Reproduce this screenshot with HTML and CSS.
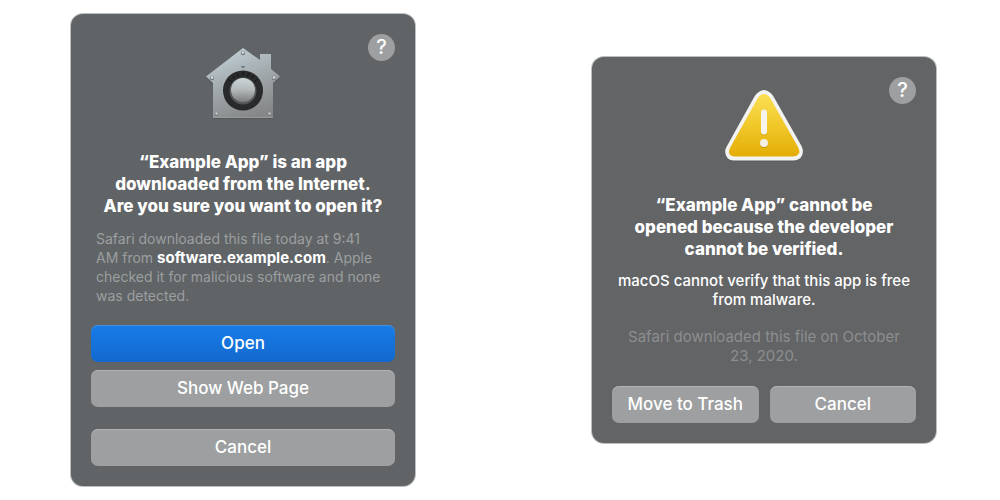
FILE: index.html
```html
<!DOCTYPE html>
<html lang="en">
<head>
<meta charset="utf-8">
<meta name="viewport" content="width=device-width, initial-scale=1">
<title>Open app alerts</title>
<link rel="stylesheet" href="styles.css">
</head>
<body>
<main class="stage">
  <section class="alert alert-cool" role="alertdialog" aria-labelledby="download-title">
    <header class="alert-header">
      <svg class="alert-icon" width="78" height="76" viewBox="0 0 78 76" aria-hidden="true">
        <defs>
          <linearGradient id="metal" x1="0.2" y1="0" x2="0.6" y2="1">
            <stop offset="0" stop-color="#c3d3da"/>
            <stop offset="0.45" stop-color="#a5adb0"/>
            <stop offset="1" stop-color="#858788"/>
          </linearGradient>
          <linearGradient id="knob" x1="0" y1="0" x2="0" y2="1">
            <stop offset="0" stop-color="#cbd5d8"/>
            <stop offset="0.5" stop-color="#b4b8b9"/>
            <stop offset="1" stop-color="#7a7c7d"/>
          </linearGradient>
        </defs>
        <path d="M39 3 56 15V9h11v15l9 7.500-7 6.500v35H9V38l-7-6.500Z" fill="#4c5052" opacity="0.6"/>
        <path d="M39 2 56 14V8h11v15l9 7.500-7 6.500v35H9V37l-7-6.500Z" fill="url(#metal)"/>
        <path d="M9.500 71.500h59" stroke="#989a9b" stroke-width="1"/>
        <path d="M36.500 20h5l-2.500 2.500Z" fill="#70797d"/>
        <circle cx="39" cy="44.500" r="20" fill="#282a2b"/>
        <path d="M39 26v4M33.500 27l1 4M44.500 27l-1 4M28.500 29.500l2 3M49.500 29.500l-2 3M24.500 33.500l3 2M53.500 33.500l-3 2" stroke="#111314" stroke-width="1"/>
        <circle cx="39" cy="45" r="13.500" fill="#555859"/>
        <circle cx="39" cy="44" r="12" fill="url(#knob)"/>
        <g fill="#747b7e">
          <circle cx="39" cy="7" r="2.200"/><circle cx="8" cy="32" r="2.200"/><circle cx="70" cy="32" r="2.200"/>
          <circle cx="12.500" cy="68" r="1.800"/><circle cx="65.500" cy="68" r="1.800"/>
        </g>
        <g fill="#dce4e7">
          <circle cx="39" cy="6.500" r="1.300"/><circle cx="8" cy="31.500" r="1.300"/><circle cx="70" cy="31.500" r="1.300"/>
          <circle cx="12.500" cy="67.500" r="1.100"/><circle cx="65.500" cy="67.500" r="1.100"/>
        </g>
      </svg>
      <button class="help" type="button" aria-label="Help">?</button>
    </header>
    <h1 class="title" id="download-title">“Example App” is an app<br>downloaded from the Internet.<br>Are you sure you want to open it?</h1>
    <p class="detail">Safari downloaded this file today at 9:41<br>AM from <strong class="source">software.example.com</strong>. Apple<br>checked it for malicious software and none<br>was detected.</p>
    <div class="actions actions-stacked">
      <button class="action action-primary" type="button">Open</button>
      <button class="action" type="button">Show Web Page</button>
      <button class="action action-apart" type="button">Cancel</button>
    </div>
  </section>

  <section class="alert alert-neutral" role="alertdialog" aria-labelledby="verify-title">
    <header class="alert-header">
      <svg class="alert-icon" width="80" height="76" viewBox="0 0 80 76" aria-hidden="true">
        <defs>
          <linearGradient id="warning" x1="0" y1="0" x2="0" y2="1">
            <stop offset="0" stop-color="#fae056"/>
            <stop offset="0.5" stop-color="#f0c829"/>
            <stop offset="1" stop-color="#e4ad07"/>
          </linearGradient>
        </defs>
        <path d="M30.500 8.500Q35 2 40 2t9.500 6.500L77.500 58Q80 63 78 67t-8 5.500H10Q4 72 2 67.500T3 58Z" fill="#494b4d" opacity="0.45"/>
        <path d="M30.500 7.500Q35 1 40 1t9.500 6.500L77.500 57Q80 62 78 66.500T70 71.500H10Q4 71.500 2 66.500T3 57Z" fill="#f3f3f1"/>
        <path d="M33.500 9.500Q36 5 40 5t6.500 4.500L74 58Q76.500 62.500 74.500 65T69 67.500H11Q7 67.500 5.500 65T6.500 58Z" fill="url(#warning)"/>
        <path d="M40 25v18.500" stroke="#b58a10" stroke-width="6" stroke-linecap="round" opacity="0.45"/>
        <circle cx="40" cy="55" r="4" fill="#a98010" opacity="0.6"/>
        <path d="M40 23.500v19" stroke="#f6f4ed" stroke-width="6" stroke-linecap="round"/>
        <circle cx="40" cy="54" r="4" fill="#f4f0e6"/>
      </svg>
      <button class="help" type="button" aria-label="Help">?</button>
    </header>
    <h1 class="title" id="verify-title">“Example App” cannot be<br>opened because the developer<br>cannot be verified.</h1>
    <p class="message">macOS cannot verify that this app is free<br>from malware.</p>
    <p class="note">Safari downloaded this file on October<br>23, 2020.</p>
    <div class="actions actions-row">
      <button class="action" type="button">Move to Trash</button>
      <button class="action" type="button">Cancel</button>
    </div>
  </section>
</main>
</body>
</html>
```
FILE: styles.css
```css
* { box-sizing: border-box; }

body {
  margin: 0;
  background: #fff;
  color: #fff;
  font-family: Inter, "Liberation Sans", sans-serif;
}

.stage {
  display: flex;
  flex-wrap: wrap;
  align-items: center;
  justify-content: space-between;
  gap: 32px;
  min-height: 100vh;
  padding: 12px 64px 12px 71px;
}

.alert {
  flex: 0 1 344px;
  min-width: 0;
  padding: 20px;
  border-radius: 12px;
  box-shadow: 0 0 0 1px #bcbebf;
  text-align: center;
}

.alert-cool { background: #606466; }
.alert-neutral { background: #626466; }

.alert-header {
  display: grid;
  grid-template-columns: 1fr auto 1fr;
  align-items: start;
}

.alert-icon {
  grid-column: 2;
  display: block;
  margin-top: 12px;
}

.help {
  grid-column: 3;
  justify-self: end;
  width: 27px;
  height: 27px;
  padding: 0;
  border: 0;
  border-radius: 50%;
  background: #9d9fa1;
  color: #fff;
  font: 500 20px/27px Inter, "Liberation Sans", sans-serif;
}

.title {
  margin: 29px 0 0;
  font-size: 17px;
  font-weight: 800;
  line-height: 22px;
}

.detail, .message, .note {
  font-size: 15px;
  line-height: 19px;
}

.detail {
  margin: 12px 0 20px;
  padding-left: 5px;
  color: #9c9fa0;
  font-size: 14px;
  text-align: left;
}

.source {
  color: #fff;
  font-size: 15px;
  font-weight: 700;
  line-height: 1;
}

.message {
  margin: 11px 0 0;
  font-weight: 500;
}

.note {
  margin: 18px 0 21px;
  color: #8c8e90;
}

.actions { display: grid; }
.actions-stacked { gap: 8px; }

.actions-row {
  grid-template-columns: 1fr 1fr;
  gap: 11px;
}

.action {
  height: 37px;
  padding: 0 0 2px;
  border: 0;
  border-radius: 7px;
  background: #9d9fa1;
  box-shadow: inset 0 1px 0 #b0b2b4;
  color: #fff;
  font: 500 17px/22px Inter, "Liberation Sans", sans-serif;
}

.action-primary {
  background: linear-gradient(#177ce9, #1369cd);
  box-shadow: inset 0 1px 0 #4390dd;
}

.action-apart { margin-top: 14px; }
```
